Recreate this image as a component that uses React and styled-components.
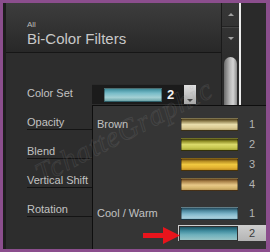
import React from "react";
import styled, { createGlobalStyle } from "styled-components";

const Global = createGlobalStyle`
  html, body { margin: 0; padding: 0; background: #8b4e8d; }
  body { width: 270px; height: 252px; overflow: hidden; font-family: "Liberation Sans", Arial, sans-serif; }
`;

const Frame = styled.div`
  width: 270px;
  height: 252px;
  box-sizing: border-box;
  padding: 3px 4px 3px 3px;
  background: #8b4e8d;
`;

const Window = styled.div`
  position: relative;
  display: flex;
  height: 100%;
  overflow: hidden;
  background: #2d2d2d;
`;

const Main = styled.div`
  width: 215px;
  flex: none;
  border-left: 3px solid #1d1d1d;
  display: flex;
  flex-direction: column;
`;

const Header = styled.div`
  height: 50px;
  box-sizing: border-box;
  padding: 17px 0 0 21px;
  background: linear-gradient(#3d3d3d, #282828);
  border-bottom: 1px solid #161616;
  display: flex;
  flex-direction: column;
`;

const Crumb = styled.div`
  font-size: 8px;
  line-height: 9px;
  color: #b8b8b8;
`;

const Title = styled.div`
  margin-top: 1px;
  font-size: 15px;
  line-height: 17px;
  color: #c8c8c8;
`;

const Content = styled.div`
  padding: 19px 0 0 21px;
  display: flex;
  flex-direction: column;
`;

const Row = styled.div`
  height: 29px;
  box-sizing: border-box;
  display: flex;
  align-items: flex-end;
  border-bottom: 1px solid ${(p) => (p.$line ? "#141414" : "transparent")};
`;

const Label = styled.div`
  width: 65px;
  flex: none;
  padding-bottom: 0;
  font-size: 11px;
  line-height: 13px;
  color: #c2c2c2;
`;

const Combo = styled.div`
  display: flex;
  align-items: flex-start;
  margin-bottom: -4px;
`;

const ComboField = styled.div`
  width: 92px;
  height: 20px;
  box-sizing: border-box;
  background: #1b1b1b;
  border-top: 1px solid #2a2a2a;
  display: flex;
  align-items: center;
  padding-left: 12px;
`;

const ComboValue = styled.span`
  margin-left: 5px;
  font-size: 13px;
  font-weight: bold;
  color: #f2f2f2;
`;

const ComboButton = styled.div`
  width: 12px;
  height: 19px;
  margin-top: 1px;
  background: linear-gradient(#e0e0e0, #a8a8a8);
  display: flex;
  align-items: flex-end;
  justify-content: center;
  padding-bottom: 2px;
  box-sizing: border-box;
`;

const Chevron = styled.span`
  width: 0;
  height: 0;
  border-left: 3px solid transparent;
  border-right: 3px solid transparent;
  border-top: 3px solid ${(p) => p.$color || "#444"};
`;

const UpTri = styled.span`
  width: 0;
  height: 0;
  border-left: 3px solid transparent;
  border-right: 3px solid transparent;
  border-bottom: 3px solid #a0a0a0;
`;

const Swatch = styled.div`
  width: ${(p) => p.$w || 57}px;
  height: ${(p) => p.$h || 13}px;
  flex: none;
  box-sizing: border-box;
  border: 1px solid ${(p) => (p.$sel ? "#303030" : "rgba(0,0,0,0.35)")};
  background: ${(p) => p.$bg};
`;

const ScrollTrack = styled.div`
  width: 18px;
  flex: none;
  box-sizing: border-box;
  border-left: 1px solid #1a1a1a;
  background: linear-gradient(#373737, #2c2c2c 60px);
  display: flex;
  flex-direction: column;
`;

const ArrowButton = styled.div`
  height: ${(p) => p.$h}px;
  box-sizing: border-box;
  display: flex;
  align-items: center;
  justify-content: center;
  border-bottom: 1px solid ${(p) => (p.$line ? "#232323" : "transparent")};
  box-shadow: ${(p) => (p.$line ? "0 1px 0 #444" : "none")};
`;

const Thumb = styled.div`
  margin: 7px 0 0 2px;
  width: 13px;
  height: 60px;
  border-radius: 7px 7px 0 0;
  background: linear-gradient(90deg, #6a6a6a 0%, #b8b8b8 45%, #d4d4d4 70%, #8c8c8c 100%);
`;

const Divider = styled.div`
  width: 2px;
  flex: none;
  background: #ececec;
`;

const SidePane = styled.div`
  flex: 1;
  background: #2a2a2a;
`;

const Menu = styled.div`
  position: absolute;
  left: 89px;
  top: 102px;
  right: 0;
  bottom: 0;
  box-sizing: border-box;
  border-top: 1px solid #0e0e0e;
  border-left: 1px solid #0e0e0e;
  background: #353535;
  padding-top: 8px;
  display: flex;
  flex-direction: column;
`;

const MenuRow = styled.div`
  height: 20px;
  flex: none;
  display: flex;
  align-items: center;
  margin-top: ${(p) => (p.$gap ? 9 : 0)}px;
`;

const GroupLabel = styled.div`
  width: 85px;
  flex: none;
  box-sizing: border-box;
  padding-left: 4px;
  font-size: 11px;
  color: #c2c2c2;
`;

const Cell = styled.div`
  flex: 1;
  height: 16px;
  display: flex;
  align-items: center;
  padding-left: ${(p) => (p.$sel ? 1 : 3)}px;
  background: ${(p) => (p.$sel ? "linear-gradient(#cfcfcf, #b4b4b4)" : "transparent")};
`;

const Num = styled.div`
  flex: 1;
  text-align: center;
  font-size: 11px;
  color: ${(p) => (p.$sel ? "#3a3a3a" : "#b4b4b4")};
`;

const Watermark = styled.div`
  position: absolute;
  left: 34px;
  top: 156px;
  transform: rotate(-27deg);
  transform-origin: left center;
  font-family: "Liberation Serif", serif;
  font-style: italic;
  font-size: 29px;
  letter-spacing: 1px;
  color: rgba(255, 255, 255, 0.02);
  -webkit-text-stroke: 1px rgba(150, 150, 150, 0.16);
  pointer-events: none;
  white-space: nowrap;
`;

const Pointer = styled.svg`
  position: absolute;
  left: 140px;
  top: 224px;
`;

const swatches = {
  teal: "linear-gradient(#3f8d9c 0%, #78bcc8 35%, #a4d0d4 70%, #6ea4a8 100%)",
  brown1: "linear-gradient(#4a3a18 0%, #8a7a48 18%, #e8ddab 50%, #dccc94 80%, #b8a870 100%)",
  brown2: "linear-gradient(#393508 0%, #8a8820 18%, #dada6a 50%, #c8c850 80%, #a6a636 100%)",
  brown3: "linear-gradient(#5a3a08 0%, #b08820 18%, #f0c840 50%, #e2b232 80%, #c09020 100%)",
  brown4: "linear-gradient(#5a3a18 0%, #a07840 18%, #e8c888 55%, #d8b870 80%, #b89858 100%)",
  cw1: "linear-gradient(#24485a 0%, #4e8aa0 25%, #80b8cc 55%, #a6cedc 85%, #90bccb 100%)",
  cw2: "linear-gradient(#1c5262 0%, #3f8c9e 30%, #6eb0bc 60%, #98c4c6 100%)",
};

const items = [
  { group: "Brown", n: 1, bg: swatches.brown1 },
  { n: 2, bg: swatches.brown2 },
  { n: 3, bg: swatches.brown3 },
  { n: 4, bg: swatches.brown4 },
  { group: "Cool / Warm", n: 1, bg: swatches.cw1, gap: true },
  { n: 2, bg: swatches.cw2, sel: true },
];

const rows = ["Opacity", "Blend", "Vertical Shift", "Rotation"];

export default function App() {
  return (
    <Frame>
      <Global />
      <Window>
        <Main>
          <Header>
            <Crumb>All</Crumb>
            <Title>Bi-Color Filters</Title>
          </Header>
          <Content>
            <Row>
              <Label>Color Set</Label>
              <Combo>
                <ComboField>
                  <Swatch $w={58} $h={14} $bg={swatches.teal} />
                  <ComboValue>2</ComboValue>
                </ComboField>
                <ComboButton>
                  <Chevron />
                </ComboButton>
              </Combo>
            </Row>
            {rows.map((r) => (
              <Row key={r} $line>
                <Label>{r}</Label>
              </Row>
            ))}
          </Content>
        </Main>
        <ScrollTrack>
          <ArrowButton $h={24} $line>
            <UpTri />
          </ArrowButton>
          <ArrowButton $h={23}>
            <Chevron $color="#a0a0a0" />
          </ArrowButton>
          <Thumb />
        </ScrollTrack>
        <Divider />
        <SidePane />
        <Menu>
          {items.map((it, i) => (
            <MenuRow key={i} $gap={it.gap}>
              <GroupLabel>{it.group || ""}</GroupLabel>
              <Cell $sel={it.sel}>
                <Swatch $w={it.sel ? 59 : 57} $h={it.sel ? 15 : 13} $sel={it.sel} $bg={it.bg} />
                <Num $sel={it.sel}>{it.n}</Num>
              </Cell>
            </MenuRow>
          ))}
        </Menu>
        <Watermark>TchatteGraphic</Watermark>
        <Pointer width="37" height="17" viewBox="0 0 37 17">
          <polygon points="0,6 20,6 20,0 37,8.5 20,17 20,11 0,11" fill="#e8141c" />
        </Pointer>
      </Window>
    </Frame>
  );
}
